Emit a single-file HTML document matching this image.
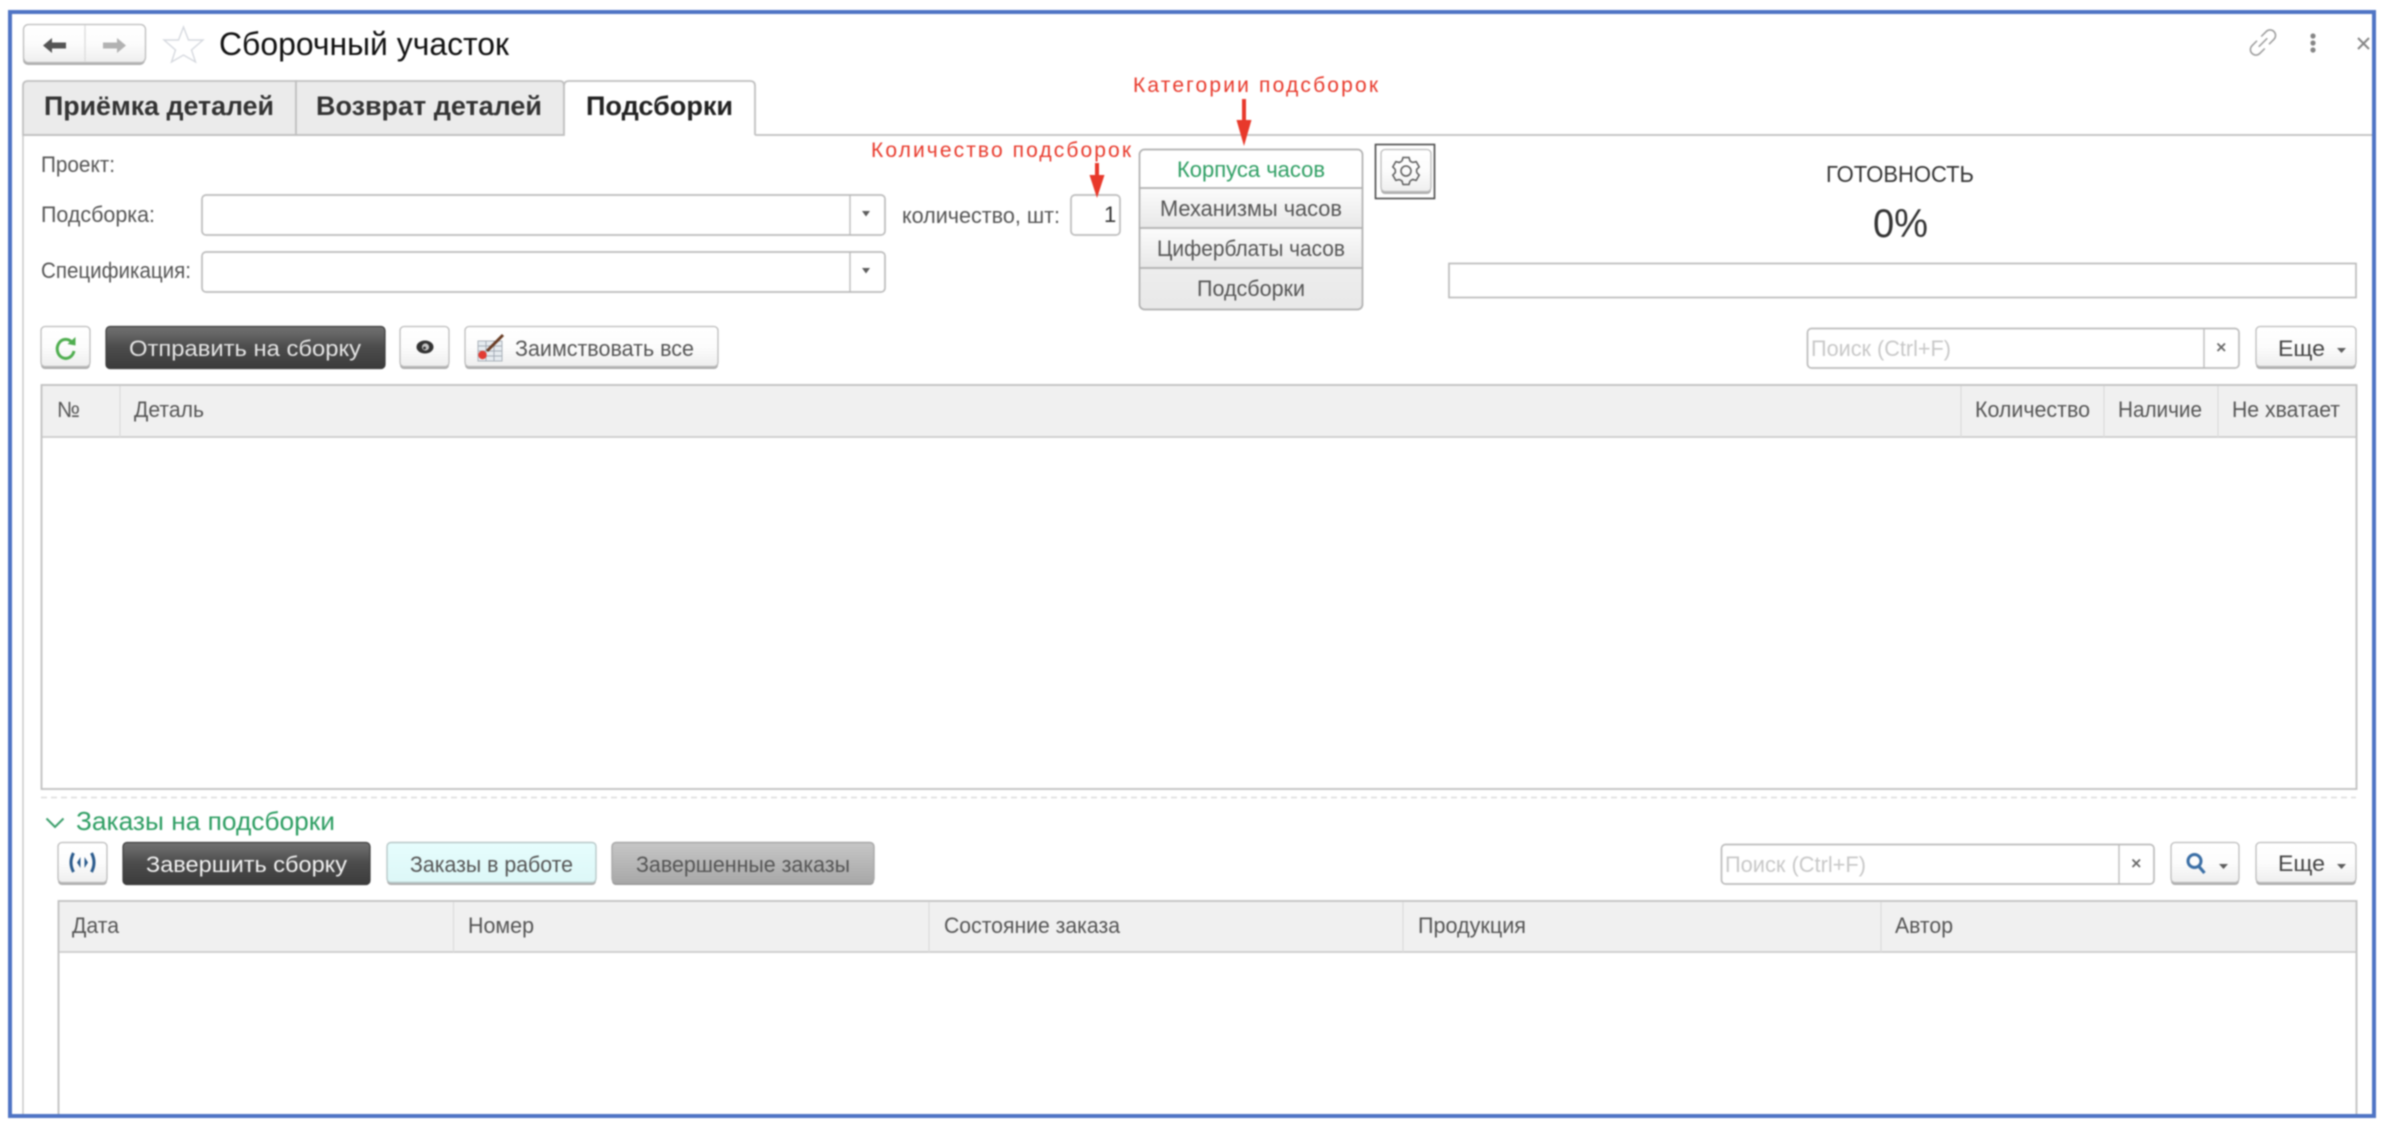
<!DOCTYPE html>
<html lang="ru">
<head>
<meta charset="utf-8">
<title>Сборочный участок</title>
<style>
html,body{margin:0;padding:0;background:#fff;width:2384px;height:1128px;overflow:hidden}
svg{display:block;filter:blur(.7px)}
text{font-family:"Liberation Sans",sans-serif;font-size:22px;fill:#555}
.b{stroke:#bcbcbc;stroke-width:1.3;fill:url(#g)}
.d{stroke:#3c3c3c;stroke-width:1.2;fill:url(#dk)}
.sh{fill:#adadad}
.ln{stroke:#c0c0c0;stroke-width:1.8;fill:none}
.dv{stroke:#dedede;stroke-width:1.4;fill:none}
.h{fill:#f0f0f0}
.tri{fill:#5c5c5c}
.i{fill:#fff;stroke:#bcbcbc;stroke-width:1.7}
</style>
</head>
<body>
<svg width="2384" height="1128" viewBox="0 0 2384 1128" xmlns="http://www.w3.org/2000/svg">
<defs>
<linearGradient id="g" x1="0" y1="0" x2="0" y2="1"><stop offset="0" stop-color="#fff"/><stop offset=".5" stop-color="#fcfcfc"/><stop offset="1" stop-color="#eeeeee"/></linearGradient>
<linearGradient id="dk" x1="0" y1="0" x2="0" y2="1"><stop offset="0" stop-color="#727272"/><stop offset=".5" stop-color="#4b4b4b"/><stop offset="1" stop-color="#3b3b3b"/></linearGradient>
<linearGradient id="gr" x1="0" y1="0" x2="0" y2="1"><stop offset="0" stop-color="#c6c6c6"/><stop offset="1" stop-color="#a8a8a8"/></linearGradient>
<linearGradient id="cy" x1="0" y1="0" x2="0" y2="1"><stop offset="0" stop-color="#e6fdfd"/><stop offset="1" stop-color="#dcf7f7"/></linearGradient>
<linearGradient id="cat" x1="0" y1="0" x2="0" y2="1"><stop offset="0" stop-color="#fbfbfb"/><stop offset="1" stop-color="#e8e8e8"/></linearGradient>
</defs>
<rect width="2384" height="1128" fill="#fff"/>

<!-- page lines -->
<path d="M23 135V1114" stroke="#cccccc" stroke-width="1.6" fill="none"/>
<path d="M755 135H2372" class="ln"/>

<!-- nav -->
<rect x="23" y="26" width="122" height="39" rx="5" class="sh"/>
<rect x="23.5" y="24.5" width="122" height="38" rx="5" class="b"/>
<path d="M85 25V62" class="dv"/>
<path d="M43 45.5L52 38V42.5H66V48.5H52V53Z" fill="#555"/>
<path d="M126 45.5L117 38V42.5H103V48.5H117V53Z" fill="#b2b2b2"/>
<polygon points="183.5,27 188.5,40 203,40 191.5,50 195.5,62 183.5,55 171.5,62 175.5,50 164,40 178.5,40" fill="#fff" stroke="#d6d9df" stroke-width="1.4"/>
<text x="219" y="55" textLength="290" lengthAdjust="spacingAndGlyphs" style="font-size:32px;fill:#111">Сборочный участок</text>

<!-- top right icons -->
<g transform="translate(2263 42.5) rotate(-45)" fill="none" stroke="#9a9a9a" stroke-width="1.5">
<path d="M-3-5.5H-10A5.5 5.5 0 0 0-10 5.5H-3"/>
<path d="M3-5.5H10A5.5 5.5 0 0 1 10 5.5H3"/>
<path d="M-6 0H6"/>
</g>
<circle cx="2313" cy="36" r="2.6" fill="#858585"/><circle cx="2313" cy="43" r="2.6" fill="#858585"/><circle cx="2313" cy="50" r="2.6" fill="#858585"/>
<path d="M2358 38L2369 49M2369 38L2358 49" stroke="#858585" stroke-width="2" fill="none"/>

<!-- tabs -->
<path d="M23 135V86Q23 81 28 81H296V135Z" fill="#ebebeb" stroke="#c0c0c0" stroke-width="1.8"/>
<path d="M296 135V81H560Q564 81 564 86V135Z" fill="#ebebeb" stroke="#c0c0c0" stroke-width="1.8"/>
<path d="M564 135V86Q564 81 569 81H750Q755 81 755 86V135" fill="#fff" stroke="#c0c0c0" stroke-width="1.8"/>
<path d="M23 135H564" class="ln"/>
<text x="44" y="115" textLength="230" lengthAdjust="spacingAndGlyphs" style="font-size:27px;font-weight:bold;fill:#333">Приёмка деталей</text>
<text x="316" y="115" textLength="226" lengthAdjust="spacingAndGlyphs" style="font-size:27px;font-weight:bold;fill:#333">Возврат деталей</text>
<text x="586" y="115" textLength="147" lengthAdjust="spacingAndGlyphs" style="font-size:27px;font-weight:bold;fill:#222">Подсборки</text>

<!-- form -->
<text x="41" y="172" textLength="74" lengthAdjust="spacingAndGlyphs">Проект:</text>
<text x="41" y="222" textLength="114" lengthAdjust="spacingAndGlyphs">Подсборка:</text>
<text x="41" y="278" textLength="150" lengthAdjust="spacingAndGlyphs">Спецификация:</text>
<rect x="202" y="195" width="683" height="40" rx="4" class="i"/>
<path d="M850 195V235" stroke="#bcbcbc" stroke-width="1.4"/>
<path d="M862 211H870L866 216.5Z" class="tri"/>
<rect x="202" y="252" width="683" height="40" rx="4" class="i"/>
<path d="M850 252V292" stroke="#bcbcbc" stroke-width="1.4"/>
<path d="M862 268H870L866 273.5Z" class="tri"/>
<text x="902" y="223" textLength="158" lengthAdjust="spacingAndGlyphs">количество, шт:</text>
<rect x="1071" y="195" width="49" height="40" rx="4" class="i"/>
<text x="1104" y="222" style="fill:#333">1</text>

<!-- annotations -->
<text x="871" y="157" textLength="260" lengthAdjust="spacing" style="font-size:21px;fill:#e8392b">Количество подсборок</text>
<text x="1133" y="92" textLength="245" lengthAdjust="spacing" style="font-size:21px;fill:#e8392b">Категории подсборок</text>

<!-- categories -->
<rect x="1139.5" y="149.5" width="223" height="160" rx="5" fill="url(#cat)" stroke="#b0b0b0" stroke-width="1.7"/>
<path d="M1140.5 188V155Q1140.5 150.5 1145 150.5H1357Q1361.5 150.5 1361.5 155V188Z" fill="#fff"/>
<rect x="1141" y="189" width="220" height="38" fill="url(#cat)"/>
<rect x="1141" y="229" width="220" height="38" fill="url(#cat)"/>
<path d="M1140 188H1362M1140 228H1362M1140 268H1362" stroke="#b0b0b0" stroke-width="1.7" fill="none"/>
<text x="1177" y="177" textLength="148" lengthAdjust="spacingAndGlyphs" style="fill:#2e9e63">Корпуса часов</text>
<text x="1160" y="216" textLength="182" lengthAdjust="spacingAndGlyphs">Механизмы часов</text>
<text x="1157" y="256" textLength="188" lengthAdjust="spacingAndGlyphs">Циферблаты часов</text>
<text x="1197" y="296" textLength="108" lengthAdjust="spacingAndGlyphs">Подсборки</text>

<!-- arrows (drawn over) -->
<path d="M1242 99H1246V120H1251.5L1244 146L1236.5 120H1242Z" fill="#e8392b"/>
<path d="M1095 163H1099V175H1104.5L1097 198L1089.5 175H1095Z" fill="#e8392b"/>

<!-- gear button -->
<rect x="1375.5" y="144.5" width="59" height="54" fill="#fff" stroke="#4a4a4a" stroke-width="1.6"/>
<rect x="1381" y="151" width="50" height="43" rx="4" class="sh"/>
<rect x="1381" y="149.5" width="50" height="42" rx="4" class="b"/>
<g transform="translate(1406 171)" fill="none" stroke="#5a5a5a" stroke-width="1.5">
<circle r="5"/>
<path d="M-4-10L-3-13.5L3-13.5L4-10L6.66-8.46"/>
<path d="M-4-10L-3-13.5L3-13.5L4-10L6.66-8.46" transform="rotate(60)"/>
<path d="M-4-10L-3-13.5L3-13.5L4-10L6.66-8.46" transform="rotate(120)"/>
<path d="M-4-10L-3-13.5L3-13.5L4-10L6.66-8.46" transform="rotate(180)"/>
<path d="M-4-10L-3-13.5L3-13.5L4-10L6.66-8.46" transform="rotate(240)"/>
<path d="M-4-10L-3-13.5L3-13.5L4-10L6.66-8.46" transform="rotate(300)"/>
</g>

<!-- readiness -->
<text x="1826" y="182" textLength="148" lengthAdjust="spacingAndGlyphs" style="font-size:23px;fill:#333">ГОТОВНОСТЬ</text>
<text x="1873" y="237" textLength="55" lengthAdjust="spacingAndGlyphs" style="font-size:40px;fill:#333">0%</text>
<rect x="1449" y="263.5" width="907" height="34" fill="#fff" stroke="#bcbcbc" stroke-width="1.7"/>

<!-- toolbar 1 -->
<rect x="41" y="328" width="49" height="41" rx="4" class="sh"/>
<rect x="41" y="326.5" width="49" height="40" rx="4" class="b"/>
<path d="M72 342.5A8.5 9.5 0 1 0 74 351" fill="none" stroke="#4fae4f" stroke-width="3"/>
<path d="M67.5 344L75.500 337V345.5Z" fill="#4fae4f"/>
<rect x="106" y="326.5" width="279" height="42" rx="4" class="d"/>
<text x="129" y="356" textLength="232" lengthAdjust="spacingAndGlyphs" style="fill:#e6e6e6">Отправить на сборку</text>
<rect x="400" y="328" width="49" height="41" rx="4" class="sh"/>
<rect x="400" y="326.5" width="49" height="40" rx="4" class="b"/>
<ellipse cx="425" cy="347" rx="8.5" ry="6.5" fill="#333"/>
<circle cx="425.5" cy="347" r="3.6" fill="#c4c4c4"/>
<circle cx="424.5" cy="348" r="1.4" fill="#333"/>
<rect x="465" y="328" width="253" height="41" rx="4" class="sh"/>
<rect x="465" y="326.5" width="253" height="40" rx="4" class="b"/>
<rect x="478" y="341" width="24" height="20" fill="#e6ebf0" stroke="#aab2ba" stroke-width="1"/>
<path d="M478 346H502M486 341V361M494 341V361M478 351H502M478 356H502" stroke="#a4adb6" stroke-width="1" fill="none"/>
<path d="M503 335L487 351" stroke="#6a3d25" stroke-width="3" fill="none"/>
<circle cx="482.5" cy="355" r="4.2" fill="#e23b33"/>
<text x="515" y="356" textLength="179" lengthAdjust="spacingAndGlyphs">Заимствовать все</text>

<rect x="1807.5" y="328.5" width="431.5" height="39.5" rx="4" class="i"/>
<path d="M2204 329V368" stroke="#bcbcbc" stroke-width="1.4"/>
<text x="1811" y="356" textLength="140" lengthAdjust="spacingAndGlyphs" style="fill:#c8c8c8">Поиск (Ctrl+F)</text>
<path d="M2217.5 343.500L2225 351M2225 343.500L2217.5 351" stroke="#666" stroke-width="1.8" fill="none"/>
<rect x="2256" y="328" width="100" height="41" rx="4" class="sh"/>
<rect x="2256" y="326.5" width="100" height="40" rx="4" class="b"/>
<text x="2278" y="356" textLength="47" lengthAdjust="spacingAndGlyphs" style="fill:#444">Еще</text>
<path d="M2337 348H2346L2341.5 353Z" class="tri"/>

<!-- table 1 -->
<rect x="41.5" y="385" width="2315" height="404" fill="#fff" class="ln"/>
<rect x="42.5" y="386" width="2313" height="51" class="h"/>
<path d="M42 437H2356" stroke="#cbcbcb" stroke-width="1.8"/>
<path d="M120 386V437M1961 386V437M2104 386V437M2218 386V437" class="dv"/>
<text x="57" y="417" textLength="23" lengthAdjust="spacingAndGlyphs">№</text>
<text x="134" y="417" textLength="70" lengthAdjust="spacingAndGlyphs">Деталь</text>
<text x="1975" y="417" textLength="115" lengthAdjust="spacingAndGlyphs">Количество</text>
<text x="2118" y="417" textLength="84" lengthAdjust="spacingAndGlyphs">Наличие</text>
<text x="2232" y="417" textLength="108" lengthAdjust="spacingAndGlyphs">Не хватает</text>

<!-- splitter -->
<path d="M41 797.5H2356" stroke="#dcdcdc" stroke-width="1.4" stroke-dasharray="6 4" fill="none"/>

<!-- group -->
<path d="M46.5 818.5L55 827L63.5 818.5" fill="none" stroke="#3a9e6a" stroke-width="2"/>
<text x="76" y="830" textLength="259" lengthAdjust="spacingAndGlyphs" style="font-size:26px;fill:#2e9e63">Заказы на подсборки</text>

<!-- toolbar 2 -->
<rect x="58" y="844" width="49" height="41" rx="4" class="sh"/>
<rect x="58" y="842.5" width="49" height="40" rx="4" class="b"/>
<path d="M73.5 853Q68.5 862.5 73.5 872M91.5 853Q96.5 862.5 91.5 872" fill="none" stroke="#2a5a8c" stroke-width="3"/>
<path d="M80.5 857V868L77 862.5ZM84.5 857V868L88 862.5Z" fill="#2a5a8c"/>
<rect x="123" y="842.5" width="247" height="42" rx="4" class="d"/>
<text x="146" y="872" textLength="201" lengthAdjust="spacingAndGlyphs" style="fill:#f2f2f2">Завершить сборку</text>
<rect x="387" y="844" width="209" height="41" rx="4" class="sh"/>
<rect x="387" y="842.5" width="209" height="40" rx="4" fill="url(#cy)" stroke="#b8c8c8" stroke-width="1.4"/>
<text x="410" y="872" textLength="163" lengthAdjust="spacingAndGlyphs">Заказы в работе</text>
<rect x="612" y="844" width="262" height="41" rx="4" fill="#9a9a9a"/>
<rect x="612" y="842.5" width="262" height="40" rx="4" fill="url(#gr)" stroke="#a8a8a8" stroke-width="1.4"/>
<text x="636" y="872" textLength="214" lengthAdjust="spacingAndGlyphs">Завершенные заказы</text>

<rect x="1721.5" y="844.5" width="432.5" height="39.5" rx="4" class="i"/>
<path d="M2119 845V884" stroke="#bcbcbc" stroke-width="1.4"/>
<text x="1725" y="872" textLength="141" lengthAdjust="spacingAndGlyphs" style="fill:#c8c8c8">Поиск (Ctrl+F)</text>
<path d="M2132.5 859.5L2140 867M2140 859.5L2132.5 867" stroke="#666" stroke-width="1.8" fill="none"/>
<rect x="2171" y="844" width="68" height="41" rx="4" class="sh"/>
<rect x="2171" y="842.5" width="68" height="40" rx="4" class="b"/>
<circle cx="2194.5" cy="861" r="6.5" fill="none" stroke="#3a6ea5" stroke-width="3"/>
<path d="M2198.5 866L2204.5 873" stroke="#3a6ea5" stroke-width="3.2" fill="none"/>
<path d="M2219 864H2228L2223.5 869Z" class="tri"/>
<rect x="2256" y="844" width="100" height="41" rx="4" class="sh"/>
<rect x="2256" y="842.5" width="100" height="40" rx="4" class="b"/>
<text x="2278" y="871" textLength="47" lengthAdjust="spacingAndGlyphs" style="fill:#444">Еще</text>
<path d="M2337 864H2346L2341.5 869Z" class="tri"/>

<!-- table 2 -->
<path d="M58.5 1114V901H2356.5V1114" class="ln"/>
<rect x="59.5" y="902" width="2296" height="50" class="h"/>
<path d="M59 952H2356" stroke="#cbcbcb" stroke-width="1.8"/>
<path d="M453.5 902V952M929 902V952M1403 902V952M1881 902V952" class="dv"/>
<text x="72" y="933" textLength="47" lengthAdjust="spacingAndGlyphs">Дата</text>
<text x="468" y="933" textLength="66" lengthAdjust="spacingAndGlyphs">Номер</text>
<text x="944" y="933" textLength="176" lengthAdjust="spacingAndGlyphs">Состояние заказа</text>
<text x="1418" y="933" textLength="108" lengthAdjust="spacingAndGlyphs">Продукция</text>
<text x="1895" y="933" textLength="58" lengthAdjust="spacingAndGlyphs">Автор</text>

<!-- blue frame -->
<rect x="10" y="12" width="2364" height="1104" fill="none" stroke="#4f74c4" stroke-width="4"/>
</svg>
</body>
</html>
